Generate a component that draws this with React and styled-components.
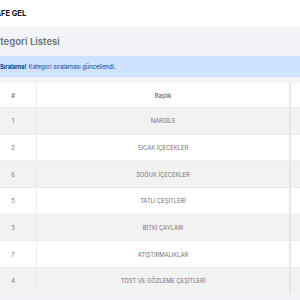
import React from 'react';
import styled, { createGlobalStyle } from 'styled-components';

const GlobalStyle = createGlobalStyle`
  body {
    margin: 0;
    background: #f3f4f7;
    font-family: Inter, "Noto Sans", sans-serif;
    overflow: hidden;
  }
`;

const Page = styled.div`
  margin-left: -20px;
  width: 380px;
`;

const TopBar = styled.div`
  height: 27px;
  background: #fff;
  display: flex;
  align-items: center;
  padding-left: 10px;
  font-size: 7.5px;
  font-weight: 700;
  color: #111;
`;

const Title = styled.h1`
  margin: 0;
  height: 29px;
  display: flex;
  align-items: center;
  padding-left: 8px;
  font-size: 9.6px;
  font-weight: 600;
  color: #6b7280;
`;

const Alert = styled.div`
  height: 21px;
  display: flex;
  align-items: center;
  background: #cfe2ff;
  color: #084298;
  font-size: 5.8px;
  padding-left: 20px;

  strong {
    font-weight: 700;
    margin-right: 2px;
  }
`;

const TableWrap = styled.div`
  margin: 6px 0 0 10px;
`;

const Table = styled.table`
  border-collapse: collapse;
  width: 330px;
  background: #fff;
  font-size: 5.8px;
  color: #6c757d;
`;

const Th = styled.th`
  height: 24px;
  padding: 0;
  font-weight: 600;
  text-align: center;
  color: #6c757d;
  width: ${p => p.w || 'auto'};
  border-right: ${p => (p.thick ? '2px solid #e6e6e6' : '1px solid #ececec')};
`;

const Row = styled.tr`
  background: ${p => (p.odd ? '#f2f2f2' : '#fff')};
  border-top: 1px solid #ececec;
`;

const Td = styled.td`
  height: 25.7px;
  padding: 0;
  text-align: center;
  color: #6c757d;
  border-right: ${p => (p.thick ? '2px solid #e6e6e6' : '1px solid #ececec')};
`;

const rows = [
  { id: 1, name: 'NARGİLE' },
  { id: 2, name: 'SICAK İÇECEKLER' },
  { id: 6, name: 'SOĞUK İÇECEKLER' },
  { id: 5, name: 'TATLI ÇEŞİTLERİ' },
  { id: 3, name: 'BİTKİ ÇAYLARI' },
  { id: 7, name: 'ATIŞTIRMALIKLAR' },
  { id: 4, name: 'TOST VE GÖZLEME ÇEŞİTLERİ' },
];

export default function App() {
  return (
    <Page>
      <GlobalStyle />
      <TopBar>KAFE GEL</TopBar>
      <Title>Kategori Listesi</Title>
      <Alert>
        <strong>Sıralama!</strong> Kategori sıralaması güncellendi.
      </Alert>
      <TableWrap>
        <Table>
          <thead>
            <tr>
              <Th w="46px">#</Th>
              <Th w="252px" thick>Başlık</Th>
              <Th></Th>
            </tr>
          </thead>
          <tbody>
            {rows.map((r, i) => (
              <Row key={r.id} odd={i % 2 === 0}>
                <Td>{r.id}</Td>
                <Td thick>{r.name}</Td>
                <Td></Td>
              </Row>
            ))}
          </tbody>
        </Table>
      </TableWrap>
    </Page>
  );
}
